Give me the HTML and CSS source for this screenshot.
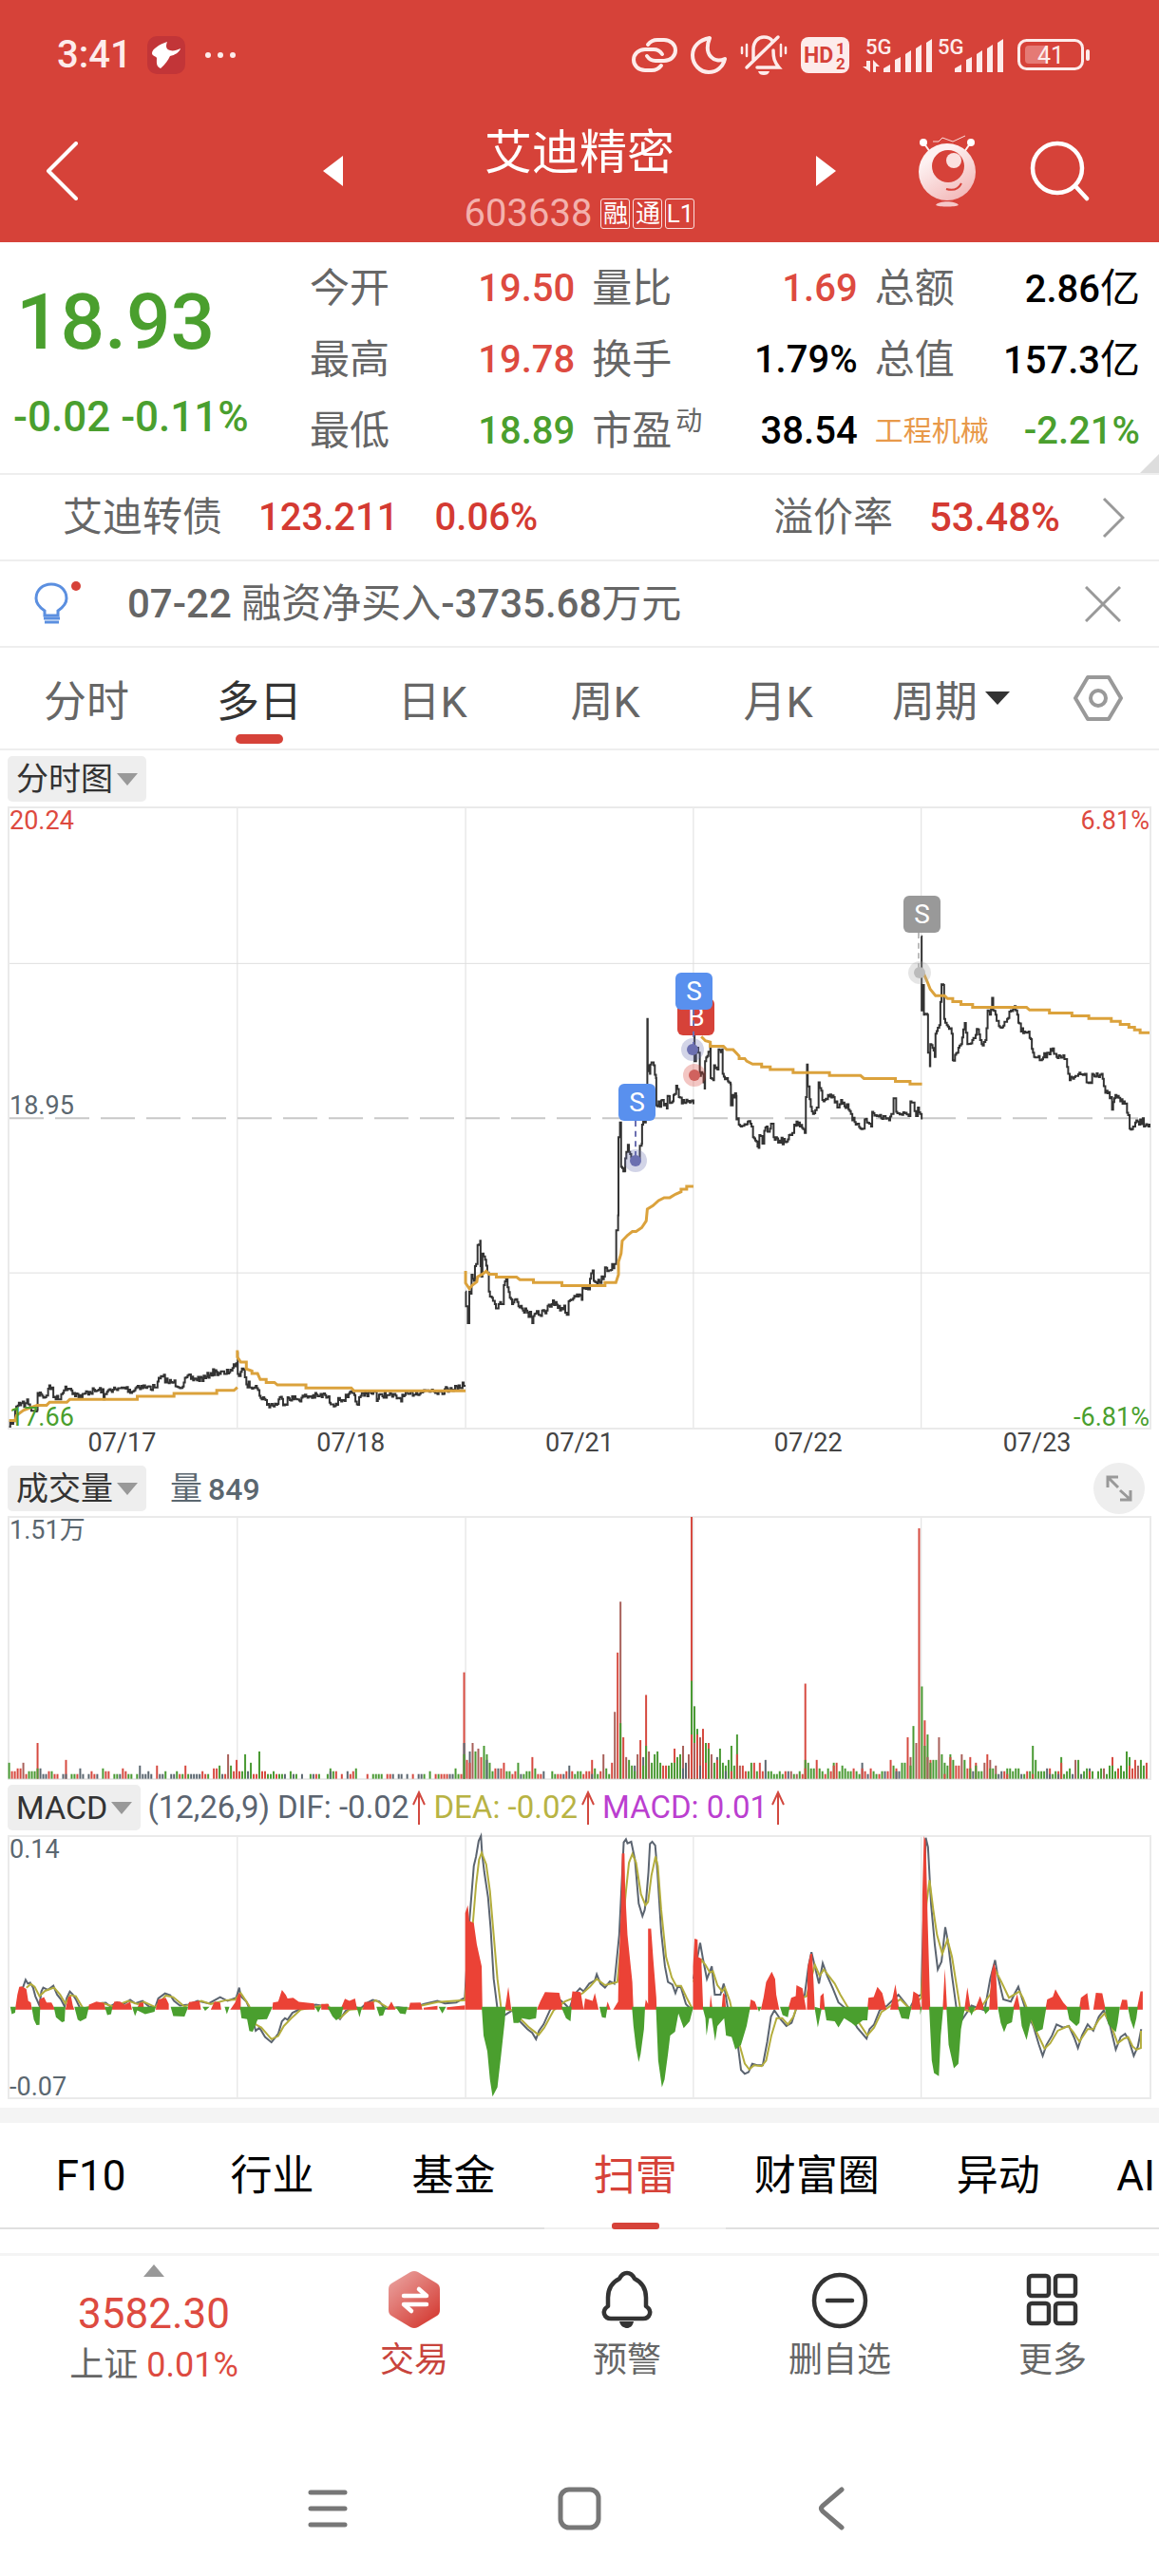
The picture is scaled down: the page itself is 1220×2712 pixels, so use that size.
FILE: index.html
```
<!DOCTYPE html>
<html lang="zh-CN">
<head>
    <meta charset="utf-8" />
    <meta name="viewport" content="width=device-width, initial-scale=1" />
    <title>艾迪精密 603638</title>
    <link rel="stylesheet" href="styles.css">
</head>
<body>
    <header class="top">
        <div class="statusBar">
            <span class="clock">3:41</span>
            <svg class="appBadge" width="40" height="40" viewBox="0 0 40 40"><rect width="40" height="40" rx="10" fill="#c23538"/><path d="M21 6C12 9 5 14 5 18c0 3 4 3 5 5 0 4-1 9 4 11 5-4 8-9 10-13 5-1 10-4 11-8-4 2-8 3-11 2-4-1-5-4-3-9z" fill="#fff"/></svg>
            <svg width="34" height="8" viewBox="0 0 34 8" fill="#fdeceb"><circle cx="4" cy="4" r="3"/><circle cx="17" cy="4" r="3"/><circle cx="30" cy="4" r="3"/></svg>
            <div class="statusIcons">
                <svg width="48" height="36" viewBox="0 0 48 36" fill="none" stroke="#fdeceb" stroke-width="4" stroke-linecap="round"><path d="M17 7c3-4 6-5 10-5h7c7 0 12 5 12 11s-5 11-12 11h-9c-4 0-7-2-9-5"/><path d="M31 29c-3 4-6 5-10 5h-7C7 34 2 29 2 23s5-11 12-11h9c4 0 7 2 9 5"/></svg>
                <svg width="38" height="40" viewBox="0 0 38 40" fill="none" stroke="#fdeceb" stroke-width="4" stroke-linejoin="round"><path d="M20 2C9 4 2 11 2 20c0 10 8 18 17 18 8 0 15-5 17-14-11 5-23-4-16-22z"/></svg>
                <svg width="50" height="44" viewBox="0 0 50 44" fill="none" stroke="#fdeceb" stroke-width="3.5" stroke-linecap="round"><path d="M14 27V16C14 8 19 3 25 3c4 0 7 1 9 4M35 17c0 8 1 12 6 18H18M7 35L40 3"/><path d="M2 14v6M7 11v12M43 11v12M48 14v6" stroke-width="2.5"/><path d="M19 39h12c-1 3-3 4-6 4s-5-1-6-4z" fill="#fdeceb" stroke="none"/></svg>
                <svg width="51" height="38" viewBox="0 0 51 38"><rect width="51" height="38" rx="8" fill="#fdeceb"/><text class="svgText" x="3" y="27" font-size="23" font-weight="700" fill="#d64239">HD</text><text class="svgText" x="37" y="18" font-size="17" font-weight="700" fill="#d64239">1</text><text class="svgText" x="37" y="34" font-size="17" font-weight="700" fill="#d64239">2</text></svg>
                <div class="signals">
                    <svg width="73" height="38" viewBox="0 0 73 38" fill="#fdeceb"><text class="svgText" x="3" y="18" font-size="22" font-weight="500">5G</text><path d="M4 25h4v12L0 31h4zM11 37V24l7 7h-4v6z"/><path d="M22 37v-4l7-4v8zM34 37V24l6-3v16zM45 37V18l6-4v23zM56 37V12l6-4v29zM67 37V6l6-4v35z"/></svg>
                    <svg width="70" height="38" viewBox="0 0 70 38" fill="#fdeceb"><text class="svgText" x="0" y="18" font-size="22" font-weight="500">5G</text><path d="M18 37v-4l7-4v8zM30 37V24l6-3v16zM41 37V18l6-4v23zM52 37V12l6-4v29zM63 37V6l6-4v35z"/></svg>
                </div>
                <svg width="76" height="34" viewBox="0 0 76 34"><rect x="1.500" y="1.500" width="67" height="30" rx="8" fill="none" stroke="#fdeceb" stroke-width="3"/><rect x="8" y="7" width="24" height="19" rx="4" fill="#e57a75"/><rect x="72" y="11" width="4" height="12" rx="2" fill="#fdeceb"/><text class="svgText" x="35" y="26" font-size="25" text-anchor="middle" fill="#fdeceb">41</text></svg>
            </div>
        </div>
        <div class="titleBar">
            <div class="titleSide">
                <button class="iconButton" aria-label="返回"><svg width="34" height="62" viewBox="0 0 34 62"><path d="M32 2L3 31l29 29" fill="none" stroke="#fff" stroke-width="4" stroke-linecap="round" stroke-linejoin="round"/></svg></button>
                <button class="iconButton" aria-label="上一只"><svg width="21" height="32" viewBox="0 0 21 32"><path d="M21 0v32L0 16z" fill="#fff"/></svg></button>
            </div>
            <div class="stockTitle">
                <h1>艾迪精密</h1>
                <div class="stockCode"><span>603638</span><i>融</i><i>通</i><i>L1</i></div>
            </div>
            <div class="titleSide titleRight">
                <button class="iconButton" aria-label="下一只"><svg width="21" height="32" viewBox="0 0 21 32"><path d="M0 0v32l21-16z" fill="#fff"/></svg></button>
                <div class="titleTools">
                    <button class="iconButton" aria-label="助手">
                        <svg width="61" height="76" viewBox="0 0 61 76">
                            <defs><linearGradient id="bot" x1="0" y1="0" x2="0.600" y2="1"><stop offset="0.300" stop-color="#fdf1f1"/><stop offset="1" stop-color="#f3bcbc"/></linearGradient></defs>
                            <path d="M5 8l7 10M55 8l-7 10" stroke="#fdf1f1" stroke-width="2"/>
                            <circle cx="5" cy="8" r="4" fill="#fff"/><circle cx="55" cy="8" r="4" fill="#fff"/>
                            <path d="M15 7h6l4-4 11 4 13-6" fill="none" stroke="#fbdedd"/>
                            <circle cx="30" cy="39" r="30" fill="url(#bot)"/>
                            <circle cx="31" cy="33" r="17" fill="#d64239"/><circle cx="37" cy="27" r="8" fill="#fbe0df"/>
                            <path d="M29 57c7 2 13 0 16-6" fill="none" stroke="#d64239" stroke-width="2"/>
                            <path d="M18 74c3-5 21-5 24 0-4 2-20 2-24 0z" fill="#f5c8c8"/>
                        </svg>
                    </button>
                    <button class="iconButton" aria-label="搜索"><svg width="63" height="64" viewBox="0 0 63 64" fill="none" stroke="#fff" stroke-width="4.500" stroke-linecap="round"><circle cx="29" cy="29" r="26"/><path d="M48 48l12 13"/></svg></button>
                </div>
            </div>
        </div>
    </header>

    <section class="quote">
        <div class="priceBox">
            <div class="price">18.93</div>
            <div class="change">-0.02 -0.11%</div>
        </div>
        <dl class="stats">
            <div><dt>今开</dt><dd class="up">19.50</dd></div>
            <div><dt>量比</dt><dd class="up">1.69</dd></div>
            <div><dt>总额</dt><dd>2.86<small>亿</small></dd></div>
            <div><dt>最高</dt><dd class="up">19.78</dd></div>
            <div><dt>换手</dt><dd>1.79%</dd></div>
            <div><dt>总值</dt><dd>157.3<small>亿</small></dd></div>
            <div><dt>最低</dt><dd class="down">18.89</dd></div>
            <div><dt>市盈<sup>动</sup></dt><dd>38.54</dd></div>
            <div><dt class="industry">工程机械</dt><dd class="down">-2.21%</dd></div>
        </dl>
    </section>

    <a class="bond" href="#bond">
        <span>艾迪转债</span><b>123.211</b><b>0.06%</b>
        <span class="premium">溢价率</span><b>53.48%</b>
        <svg width="24" height="44" viewBox="0 0 24 44"><path d="M2 2l20 20L2 42" fill="none" stroke="#999" stroke-width="3"/></svg>
    </a>

    <div class="notice">
        <svg width="50" height="48" viewBox="0 0 50 48" fill="none" stroke="#5b8fe0" stroke-width="3"><path d="M11 36v-5C5 27 2 23 2 18 2 9 9 3 18 3s16 6 16 15c0 5-3 9-9 13v5z"/><path d="M10 39h17M11 43h15"/><circle cx="44" cy="5" r="5" fill="#d64239" stroke="none"/></svg>
        <p><b>07-22</b> 融资净买入<b>-3735.68</b>万元</p>
        <button class="iconButton" aria-label="关闭"><svg width="38" height="38" viewBox="0 0 38 38"><path d="M1 1l36 36M37 1L1 37" stroke="#999" stroke-width="3"/></svg></button>
    </div>

    <nav class="periodTabs">
        <button>分时</button>
        <button class="active">多日</button>
        <button>日K</button>
        <button>周K</button>
        <button>月K</button>
        <button>周期<svg width="26" height="14" viewBox="0 0 26 14"><path d="M0 0h26L13 14z" fill="#333"/></svg></button>
        <button aria-label="设置"><svg width="52" height="48" viewBox="0 0 52 48" fill="none" stroke="#999" stroke-width="4"><path d="M15 2h22l13 22-13 22H15L2 24z" stroke-linejoin="round"/><circle cx="26" cy="24" r="8"/></svg></button>
    </nav>

    <main class="charts">
        <div class="chartTools">
            <button class="picker">分时图<svg width="22" height="13" viewBox="0 0 22 13"><path d="M0 0h22L11 13z" fill="#999"/></svg></button>
        </div>
        <div class="chart priceChart">
            <svg viewBox="23 22 3042 1465" preserveAspectRatio="none">
                <path class="grid" d="M631 22V1487M1240 22V1487M1848 22V1487M2456 22V1487M23 389H3065M23 1121H3065"/>
                <path class="midLine" d="M23 755H3065"/>
                <g id="priceLines"></g>
                <g class="average">
                    <path d="M22 1470H38L42 1458 60 1446 75 1441 97 1434H122L130 1427H176L184 1420H364V1413H462V1406H576V1399H622L631 1392"/>
                    <path d="M631 1304V1320L640 1332H655V1348L670 1353V1359H685L692 1373H708V1380H730L738 1386H814V1393H935L942 1400H1240"/>
                    <path d="M1240 1116V1145L1250 1158 1258 1150 1270 1142 1272 1130 1285 1124 1295 1117 1303 1124H1322V1131H1376L1385 1137H1421V1144H1497V1151H1612V1144H1641L1648 1125V1095L1655 1075 1658 1045 1672 1032 1685 1023H1695L1710 1014 1722 998 1725 970 1740 962 1755 950 1770 943H1785L1800 935 1815 929V923H1830V916H1848"/>
                    <path d="M1869 562L1880 572 1893 575V585H1928L1937 593H1954L1970 608V614H1985L1990 620 2006 627H2030V634H2053V640H2114V647H2211V654H2294L2303 661H2387V668H2426V674H2458"/>
                    <path d="M2462 412L2472 432 2480 450 2494 465H2518L2526 472H2540V479H2562V486H2593V493H2737L2745 499H2798V506H2858V513H2903V519H2963V526H2987V533H3010V540H3025V546H3040V553H3065"/>
                </g>
            </svg>
            <span class="mark red m2">B</span>
            <span class="mark blue m1">S</span>
            <span class="mark blue m3">S</span>
            <span class="mark grey m4">S</span>
            <i class="stem s1"></i><i class="stem s3"></i><i class="stem s4"></i>
            <i class="dot d1"></i><i class="dot d2"></i><i class="dot d3"></i><i class="dot d4"></i>
            <span class="axis topLeft up">20.24</span>
            <span class="axis topRight up">6.81%</span>
            <span class="axis middle">18.95</span>
            <span class="axis bottomLeft down">17.66</span>
            <span class="axis bottomRight down">-6.81%</span>
        </div>
        <div class="dates"><span>07/17</span><span>07/18</span><span>07/21</span><span>07/22</span><span>07/23</span></div>

        <div class="chartTools">
            <button class="picker">成交量<svg width="22" height="13" viewBox="0 0 22 13"><path d="M0 0h22L11 13z" fill="#999"/></svg></button>
            <span class="volumeNow">量<b>849</b></span>
            <button class="expand" aria-label="放大"><svg width="28" height="28" viewBox="0 0 28 28" fill="none" stroke="#999" stroke-width="3"><path d="M2 13V2h11M3 3l10 10M26 16v10H15M25 25L15 16"/></svg></button>
        </div>
        <div class="chart subChart">
            <svg viewBox="23 291 3042 829" preserveAspectRatio="none">
                <path class="grid" d="M631 291V1120M1240 291V1120M1848 291V1120M2456 291V1120"/>
                <g id="volumeBars"></g>
            </svg>
            <span class="axis topLeft">1.51万</span>
        </div>

        <div class="chartTools">
            <button class="picker">MACD<svg width="22" height="13" viewBox="0 0 22 13"><path d="M0 0h22L11 13z" fill="#999"/></svg></button>
            <div class="macdValues">
                <span>(12,26,9)</span>
                <span>DIF: -0.02<svg width="14" height="36" viewBox="0 0 14 36"><path d="M7 36V2M1 15L7 2l6 13"/></svg></span>
                <span class="dea">DEA: -0.02<svg width="14" height="36" viewBox="0 0 14 36"><path d="M7 36V2M1 15L7 2l6 13"/></svg></span>
                <span class="macd">MACD: 0.01<svg width="14" height="36" viewBox="0 0 14 36"><path d="M7 36V2M1 15L7 2l6 13"/></svg></span>
            </div>
        </div>
        <div class="chart subChart">
            <svg viewBox="23 188 3042 829" preserveAspectRatio="none">
                <path class="grid" d="M631 188V1017M1240 188V1017M1848 188V1017M2456 188V1017"/>
                <g class="dif">
                    <path d="M58 670L66 643 72 655 78 652 86 668 92 695 103 725 108 680 113 668 125 675 140 662 150 690 160 705 170 728 176 700 184 680 192 690 200 705 212 735 245 730 255 718 280 716 292 728 310 715 325 722 345 707 358 718 378 710 395 728 412 730 420 702 438 686 452 692 462 710 478 725 500 722 525 710 555 718 585 698 605 710 628 700 636 668 640 695 655 712 665 740 680 805 690 795 705 825 722 842 740 815 750 775 758 765 765 770 778 748 795 738 840 722 870 728 890 750 905 768 920 742 945 730 960 735 975 718 992 707 1010 712 1025 735 1060 730 1090 735 1130 720 1165 710 1185 718 1215 715 1238 700 1250 460 1262 280 1268 250 1275 200 1281 185 1284 240 1290 300 1300 380 1307 480 1315 640 1325 735 1345 755 1365 740 1385 775 1405 800 1418 812 1428 832 1436 805 1448 785 1465 740 1485 700 1505 720 1517 735 1530 690 1545 670 1555 680 1570 655 1585 645 1590 625 1600 655 1612 668 1625 648 1637 655 1650 500 1662 205 1668 195 1672 208 1682 203 1692 260 1702 400 1712 440 1718 420 1722 385 1728 300 1732 210 1738 203 1746 215 1752 300 1762 490 1772 600 1780 650 1792 658 1800 685 1806 665 1815 668 1828 720 1840 735"/>
                    <path d="M1848 640L1866 525 1874 580 1884 640 1897 600 1905 690 1920 690 1929 655 1940 735 1966 845 1975 930 1985 942 1995 937 2005 910 2018 915 2033 915 2045 840 2055 760 2064 740 2080 768 2096 790 2110 780 2125 725 2145 690 2155 600 2163 555 2172 600 2183 655 2193 590 2205 630 2220 670 2235 715 2255 735 2285 795 2310 830 2318 800 2330 785 2345 740 2365 725 2395 690 2425 735 2440 700 2456 690 2468 190 2474 220 2482 400 2492 530 2500 610 2510 585 2520 475 2527 520 2538 630 2550 735 2565 770 2590 725 2625 740 2640 640 2653 580 2660 630 2675 705 2695 712 2706 685 2715 665 2727 710 2735 740 2755 790 2770 850 2780 885 2790 850 2805 820 2817 785 2835 795 2850 790 2865 830 2874 860 2885 820 2900 785 2915 805 2930 760 2943 740 2960 790 2975 865 2988 825 3000 815 3010 835 3023 885 3034 855 3043 800"/>
                </g>
                <g class="deaLine">
                    <path d="M68 668L80 656 90 665 103 695 118 678 142 668 158 690 172 718 185 692 200 695 220 735 270 717 300 728 340 710 365 720 382 713 412 730 440 693 460 698 490 728 535 710 560 720 600 708 625 706 640 685 662 725 680 785 695 795 722 832 740 822 755 790 775 765 800 738 870 722 905 765 930 738 965 735 1000 708 1030 730 1085 735 1165 714 1238 708 1260 455 1268 340 1276 260 1283 238 1295 275 1305 360 1315 500 1325 640 1335 735 1365 740 1385 765 1410 795 1435 818 1450 795 1475 740 1505 712 1530 700 1553 685 1572 665 1590 640 1612 660 1645 650 1668 360 1676 270 1685 242 1695 270 1708 370 1720 405 1727 395 1736 310 1747 250 1753 280 1762 420 1775 570 1790 635 1802 662 1815 662 1830 700 1845 735"/>
                    <path d="M1848 650L1870 580 1880 595 1892 620 1900 615 1912 660 1925 680 1932 668 1945 710 1970 845 1985 910 1997 928 2010 915 2030 918 2042 900 2056 820 2070 765 2085 765 2100 785 2115 760 2130 705 2150 695 2172 595 2185 630 2196 610 2225 655 2240 690 2260 730 2290 780 2312 820 2330 795 2350 745 2400 705 2425 735 2456 700 2470 400 2478 325 2488 420 2498 500 2512 560 2526 515 2538 570 2550 660 2560 735 2590 745 2620 722 2640 690 2655 615 2670 650 2690 700 2718 680 2727 700 2740 740 2760 800 2785 862 2800 845 2820 805 2848 790 2862 810 2878 840 2900 800 2915 800 2930 770 2945 750 2960 780 2980 845 2997 830 3008 825 3020 855 3030 865 3042 860V805"/>
                </g>
                <path class="positive" d="M38 738L44 690 49 665 56 664 68 672 73 710 80 715 83 738zM103 738V705L115 698 122 715 135 715 145 738zM172 738L180 697 187 695 192 725 196 738zM233 738L235 722 255 712 275 717 280 738zM294 738L303 712 318 712 330 722 345 713 350 738zM362 738L370 716 380 715 382 738zM413 738L420 705 440 700 448 720V738zM498 738L502 714 530 710 534 738zM560 738L570 712 585 715 588 738zM612 738L625 715 635 684 640 690V738zM724 738L726 715 740 712 750 675 760 690 765 702 780 700 795 713 836 718 838 738zM855 738V720H875V738zM906 738L918 703 930 710 945 702 951 738zM966 738L970 714 995 712 998 738zM1030 738L1042 712 1053 738zM1088 738L1092 716 1120 715 1125 738zM1128 738V732L1165 726V738zM1190 738V730L1238 724V738zM1239 738V430L1246 405 1250 455 1262 462 1270 530 1283 600 1285 738zM1345 738L1354 665 1362 738zM1430 738L1440 710 1452 682 1490 684 1500 738zM1519 738L1525 680 1547 682 1555 738 1559 702 1579 710 1585 685 1595 738zM1614 738L1619 712 1627 738zM1634 738L1647 712 1648 640 1655 400 1657 240H1664L1666 360 1672 500 1685 650 1688 738zM1717 738L1721 705 1727 720V480H1735L1741 580 1749 700 1750 738zM1847 738V600L1851 512 1859 515 1860 570 1869 575 1874 738zM1891 738L1894 690 1899 738zM1923 738L1927 685 1932 690 1935 738zM1997 738L2001 705 2012 712 2020 738zM2028 738L2035 700 2042 650 2057 617 2066 640 2069 690 2077 738zM2100 738L2109 700 2121 695 2123 660 2139 670 2149 738zM2151 738L2153 600 2160 560H2165L2172 738zM2185 738L2187 695 2195 685 2199 738zM2312 738L2315 700 2329 698 2339 665 2352 685 2363 738zM2373 738L2387 657 2397 738zM2429 738L2435 680 2449 690 2456 738zM2457 738L2459 370 2463 185 2468 200 2473 450 2480 738zM2513 738L2519 608 2525 738zM2571 738L2579 667 2588 738zM2599 738L2613 695 2625 738zM2637 738L2643 620 2650 590 2655 610 2660 738zM2699 738L2712 688 2720 738zM2787 738L2792 705 2807 697 2814 673 2822 690 2835 715 2852 738zM2877 738L2882 700 2899 685 2905 738zM2915 738L2922 684 2939 686 2948 738zM2985 738L2992 706 3005 707 3008 738zM3031 738L3041 680H3047V738z"/>
                <path class="negative" d="M25 729L29 752 38 748 40 729zM82 729L88 770 95 787 103 786 105 729zM141 729L147 762 163 778 170 775 172 729zM196 729L205 770 212 775 228 765 235 729zM277 729L284 755 294 752 298 729zM350 729L358 758 364 740 385 752 410 745 413 729zM453 729L460 758 490 760 500 729zM538 729L545 742 557 729zM597 729L603 752 610 729zM638 729L642 765 657 768 663 806 672 808 685 770 710 768 725 729zM838 729L847 747 855 729zM871 729L885 760 895 772 908 760 914 729zM949 729L957 762 964 729zM1002 729L1010 758 1020 756 1028 729zM1053 729L1065 750 1080 752 1085 729zM1168 729L1178 750 1188 729zM1283 729L1288 820 1298 870 1305 960 1312 1015 1325 985 1335 880 1345 770 1347 729zM1363 729L1368 780 1382 780 1390 765 1410 770 1428 765 1431 729zM1495 729L1508 765 1520 775 1523 729zM1597 729L1604 762 1614 764 1619 729zM1684 729L1688 790 1695 860 1702 905 1707 880 1716 800 1719 729zM1748 729L1754 900 1764 985 1771 960 1780 880 1786 820 1799 808 1808 750 1822 797 1838 775 1848 729zM1872 729L1880 765 1883 820 1890 765 1897 765 1906 838 1912 790 1930 765 1935 820 1950 825 1960 865 1975 850 1990 790 2000 729zM2018 729L2023 745 2030 729zM2079 729L2086 755 2100 762 2105 729zM2171 729L2180 795 2190 735zM2197 729L2203 772 2225 775 2235 795 2250 765 2270 780 2280 790 2300 772 2312 772 2315 729zM2393 729L2403 765 2423 768 2430 729zM2453 729V755L2458 729zM2477 729L2484 900 2490 940 2503 950 2508 820 2515 729zM2523 729L2529 850 2543 925 2555 910 2562 800 2573 729zM2581 729L2590 757 2600 729zM2620 729L2627 752 2637 740V729zM2660 729L2668 780 2677 810 2685 785 2698 778 2704 729zM2718 729L2724 790 2737 835 2745 790 2750 770 2762 810 2780 800 2790 729zM2844 729L2851 770 2870 790 2878 780 2882 729zM2945 729L2955 785 2975 810 2980 780 2986 729zM3007 729L3014 770 3023 800 3030 765 3034 729z"/>
            </svg>
            <span class="axis topLeft">0.14</span>
            <span class="axis bottomLeft">-0.07</span>
        </div>
    </main>

    <nav class="infoTabs">
        <a href="#f10">F10</a>
        <a href="#industry">行业</a>
        <a href="#fund">基金</a>
        <a href="#risk" class="active">扫雷</a>
        <a href="#club">财富圈</a>
        <a href="#moves">异动</a>
        <a href="#ai" class="cut">AI</a>
    </nav>

    <footer class="actions">
        <button class="indexBox">
            <svg width="22" height="13" viewBox="0 0 22 13"><path d="M11 0l11 13H0z" fill="#999"/></svg>
            <span class="indexValue">3582.30</span>
            <span class="indexName">上证 <b>0.01%</b></span>
        </button>
        <button class="trade">
            <svg width="60" height="62" viewBox="0 0 60 62"><defs><linearGradient id="hex" x1="0" y1="0" x2="0.800" y2="1"><stop offset="0" stop-color="#eba9a6"/><stop offset="1" stop-color="#d43a32"/></linearGradient></defs><path d="M26 2q4-2 8 0l20 12q3 2 3 6v22q0 4-3 6L34 60q-4 2-8 0L6 48q-3-2-3-6V20q0-4 3-6z" fill="url(#hex)"/><path d="M19 27h24l-8-7M43 36H19l8 7" fill="none" stroke="#fff" stroke-width="4.500" stroke-linecap="round" stroke-linejoin="round"/></svg>
            交易
        </button>
        <button>
            <svg width="60" height="62" viewBox="0 0 60 62" fill="none" stroke="#333" stroke-width="4.500" stroke-linejoin="round"><path d="M30 3c4 0 6 2 8 6 8 4 12 11 12 20v9c3 2 5 4 4 8-1 3-3 5-7 5H13c-4 0-6-2-7-5-1-4 1-6 4-8v-9c0-9 4-16 12-20 2-4 4-6 8-6z"/><path d="M22 54h15c-1 5-4 7-7 7s-7-2-8-7z" fill="#333" stroke="none"/></svg>
            预警
        </button>
        <button>
            <svg width="60" height="62" viewBox="0 0 60 62" fill="none" stroke="#333" stroke-width="4.500"><circle cx="30" cy="32" r="27"/><path d="M17 32h26" stroke-linecap="round"/></svg>
            删自选
        </button>
        <button>
            <svg width="60" height="62" viewBox="0 0 60 62" fill="none" stroke="#333" stroke-width="4.500"><rect x="5" y="6" width="21" height="21" rx="3"/><rect x="33" y="6" width="21" height="21" rx="3"/><rect x="5" y="35" width="21" height="21" rx="3"/><rect x="33" y="35" width="21" height="21" rx="3"/></svg>
            更多
        </button>
    </footer>

    <nav class="systemNav">
        <button aria-label="菜单"><svg width="44" height="46" viewBox="0 0 44 46" stroke="#777" stroke-width="5" stroke-linecap="round"><path d="M4 6h36M4 23h36M4 40h36"/></svg></button>
        <button aria-label="主页"><svg width="46" height="46" viewBox="0 0 46 46"><rect x="3" y="3" width="40" height="40" rx="9" fill="none" stroke="#777" stroke-width="5"/></svg></button>
        <button aria-label="后退"><svg width="28" height="46" viewBox="0 0 28 46"><path d="M25 3L5 20q-3 3 0 6l20 17" fill="none" stroke="#777" stroke-width="5" stroke-linecap="round"/></svg></button>
    </nav>

    <script src="charts.js"></script>
</body>
</html>
```
FILE: styles.css
```
*
{
    box-sizing:border-box;
}
body
{
    margin:0;
    background:#fff;
    color:#666;
    font-family:Roboto, "Noto Sans CJK SC", sans-serif;
    font-size:40px;
    overflow-x:hidden;
}
button
{
    margin:0;
    padding:0;
    border:0;
    background:none;
    color:inherit;
    font:inherit;
}
a
{
    color:inherit;
    text-decoration:none;
}
svg
{
    display:block;
    flex:none;
}
.up
{
    color:#dd4a40;
}
.down
{
    color:#4a9f2e;
}
.svgText
{
    font-family:Roboto, sans-serif;
}

/* header */
.top
{
    height:255px;
    background:#d64239;
    color:#fff;
}
.statusBar
{
    display:flex;
    align-items:center;
    gap:20px;
    height:115px;
    padding:0 73px 0 60px;
}
.clock
{
    color:#fdeceb;
    font-size:40px;
    font-weight:500;
}
.appBadge
{
    margin-left:-4px;
}
.statusIcons
{
    display:flex;
    align-items:center;
    gap:14px;
    margin-left:auto;
}
.signals
{
    display:flex;
    gap:6px;
}
.titleBar
{
    display:grid;
    grid-template-columns:1fr 498px 1fr;
    height:140px;
}
.titleSide
{
    display:flex;
    align-items:center;
    justify-content:space-between;
    padding:0 0 12px 48px;
}
.titleRight
{
    padding:0 73px 12px 0;
}
.titleTools
{
    display:flex;
    align-items:center;
    gap:56px;
}
.stockTitle
{
    padding-top:14px;
    text-align:center;
}
.stockTitle h1
{
    margin:0;
    font-size:50px;
    font-weight:400;
    line-height:64px;
}
.stockCode
{
    display:flex;
    align-items:center;
    justify-content:center;
    gap:3px;
    line-height:64px;
    color:#f3b1ad;
}
.stockCode span
{
    margin-right:6px;
}
.stockCode i
{
    width:31px;
    height:32px;
    border:1px solid #fbdedd;
    border-radius:3px;
    color:#fff;
    font-size:26px;
    font-style:normal;
    line-height:30px;
}

/* quote */
.quote
{
    position:relative;
    display:flex;
    height:245px;
    border-bottom:2px solid #eee;
}
.quote::after
{
    content:"";
    position:absolute;
    right:0;
    bottom:0;
    border:solid transparent;
    border-width:10px;
    border-right-color:#ddd;
    border-bottom-color:#ddd;
}
.priceBox
{
    width:326px;
    color:#4a9f2e;
    font-weight:500;
}
.price
{
    padding:36px 0 0 17px;
    font-size:82px;
    line-height:96px;
}
.change
{
    padding-left:14px;
    font-size:44px;
    line-height:104px;
}
.stats
{
    flex:1;
    display:grid;
    grid-template-columns:repeat(3, 1fr);
    grid-auto-rows:75px;
    column-gap:18px;
    margin:0;
    padding:11px 20px 0 0;
}
.stats div
{
    display:flex;
    justify-content:space-between;
    align-items:center;
    white-space:nowrap;
}
.stats dt
{
    font-size:42px;
    line-height:75px;
}
.stats sup
{
    margin-left:4px;
    font-size:28px;
    line-height:0;
}
.stats dt.industry
{
    color:#e8994a;
    font-size:30px;
}
.stats dd
{
    margin:0;
    font-weight:500;
    line-height:75px;
}
.stats dd:not(.up):not(.down)
{
    color:#000;
}
.stats small
{
    font-size:42px;
    font-weight:400;
}

/* bond and notice rows */
.bond, .notice
{
    display:flex;
    align-items:center;
    height:91px;
    border-bottom:2px solid #eee;
    font-size:42px;
    line-height:88px;
}
.bond
{
    padding:0 36px 0 66px;
}
.bond b
{
    margin-left:38px;
    color:#d43a32;
    font-size:40px;
    font-weight:500;
}
.bond .premium
{
    margin-left:auto;
}
.bond .premium + b
{
    font-size:42px;
}
.bond svg
{
    margin-left:44px;
}
.notice
{
    padding:0 40px 0 36px;
}
.notice p
{
    flex:1;
    margin:0 0 0 48px;
}
.notice b
{
    font-weight:500;
}

/* period tabs */
.periodTabs
{
    display:grid;
    grid-template-columns:repeat(6, 182fr) 128fr;
    height:108px;
    border-bottom:2px solid #eee;
    font-size:45px;
}
.periodTabs button
{
    position:relative;
    display:flex;
    align-items:center;
    justify-content:center;
    gap:8px;
}
.periodTabs .active
{
    color:#333;
}
.periodTabs .active::after, .infoTabs .active::after
{
    content:"";
    position:absolute;
    bottom:5px;
    left:50%;
    width:50px;
    height:10px;
    margin-left:-25px;
    border-radius:5px;
    background:#d64239;
}

/* charts */
.charts
{
    padding:6px 8px 9px;
    border-bottom:16px solid #f4f4f4;
}
.chartTools
{
    display:flex;
    align-items:center;
    height:48px;
    margin-bottom:5px;
    font-size:34px;
    line-height:48px;
}
.picker
{
    display:flex;
    align-items:center;
    gap:4px;
    height:48px;
    padding:0 9px;
    border-radius:5px;
    background:#eee;
    color:#333;
}
.volumeNow
{
    margin-left:25px;
    color:#5b6770;
}
.volumeNow b
{
    margin-left:6px;
    font-size:32px;
    font-weight:500;
}
.expand
{
    display:flex;
    align-items:center;
    justify-content:center;
    width:54px;
    height:54px;
    margin:0 7px 0 auto;
    border-radius:50%;
    background:#eee;
}
.macdValues
{
    display:flex;
    gap:8px;
    margin-left:7px;
    color:#5b6470;
    font-size:33px;
    white-space:nowrap;
}
.macdValues span
{
    display:flex;
    align-items:center;
    gap:4px;
}
.macdValues svg path
{
    fill:none;
    stroke:#d2483f;
    stroke-width:2;
}
.macdValues .dea
{
    color:#b8b344;
}
.macdValues .macd
{
    color:#bb3fd0;
}
.chart
{
    position:relative;
    border:2px solid #eaeaea;
}
.chart > svg
{
    width:100%;
    height:100%;
    overflow:visible;
}
.priceChart
{
    height:656px;
}
.subChart
{
    height:278px;
    margin-bottom:5px;
}
.subChart:last-child
{
    margin-bottom:0;
}
.chart path
{
    fill:none;
    vector-effect:non-scaling-stroke;
}
.chart .grid
{
    stroke:#dedede;
    stroke-width:1;
}
.chart .midLine
{
    stroke:#c8c8c8;
    stroke-width:2;
    stroke-dasharray:36 12;
}
.priceLine
{
    stroke:#333;
    stroke-width:2;
}
.average
{
    stroke:#dba23c;
    stroke-width:3;
}
.dif
{
    stroke:#5b6470;
    stroke-width:2;
}
.deaLine
{
    stroke:#b3ad3c;
    stroke-width:2;
}
.chart .positive
{
    fill:#eb4236;
}
.chart .negative
{
    fill:#4a9f2e;
}
.axis
{
    position:absolute;
    color:#5b6770;
    font-size:27px;
    line-height:30px;
}
.axis.up
{
    color:#dd4a40;
}
.axis.down
{
    color:#4a9f2e;
}
.topLeft
{
    top:-2px;
    left:0;
}
.topRight
{
    top:-2px;
    right:0;
}
.middle
{
    top:298px;
    left:0;
}
.bottomLeft
{
    bottom:-4px;
    left:0;
}
.bottomRight
{
    bottom:-4px;
    right:0;
}
.dates
{
    display:grid;
    grid-template-columns:repeat(5, 1fr);
    height:38px;
    color:#444;
    font-size:27px;
    line-height:28px;
    text-align:center;
}

/* trade marks on the price line */
.mark
{
    position:absolute;
    width:39px;
    height:39px;
    margin-left:-19px;
    border-radius:6px;
    color:#fff;
    font-size:28px;
    line-height:39px;
    text-align:center;
}
.blue
{
    background:#5990ee;
}
.red
{
    background:#d64239;
}
.grey
{
    background:#999;
}
.m1
{
    left:60%;
    top:173px;
}
.m2
{
    left:60.200%;
    top:200px;
}
.m3
{
    left:55%;
    top:290px;
}
.m4
{
    left:80%;
    top:92px;
}
.stem
{
    position:absolute;
    border-left:2px dashed #6b6fb0;
}
.s1
{
    left:59.900%;
    top:212px;
    height:40px;
}
.s3
{
    left:54.800%;
    top:329px;
    height:38px;
}
.s4
{
    left:79.700%;
    top:131px;
    height:38px;
    border-color:#bbb;
}
.dot
{
    position:absolute;
    width:12px;
    height:12px;
    margin:-6px;
    border-radius:50%;
    background:#6b6fb0;
    box-shadow:0 0 0 6px rgba(107, 111, 176, .3);
}
.d1
{
    left:59.900%;
    top:254px;
}
.d2
{
    left:60.100%;
    top:281px;
    background:#d0625e;
    box-shadow:0 0 0 6px rgba(214, 66, 57, .3);
}
.d3
{
    left:54.900%;
    top:371px;
}
.d4
{
    left:79.800%;
    top:173px;
    background:#bbb;
    box-shadow:0 0 0 6px rgba(170, 170, 170, .3);
}

/* info tabs */
.infoTabs
{
    display:flex;
    height:112px;
    margin-bottom:25px;
    overflow:hidden;
    color:#000;
    font-size:44px;
    line-height:113px;
    text-align:center;
}
.infoTabs a
{
    position:relative;
    flex:0 0 15.660%;
    border-bottom:2px solid #e0e0e0;
}
.infoTabs .active
{
    border-color:#f0f0f0;
    color:#d64239;
}
.infoTabs .active::after
{
    bottom:-2px;
    height:7px;
    border-radius:3px;
}
.infoTabs .cut
{
    padding-left:29px;
    text-align:left;
}

/* bottom bar */
.actions
{
    display:grid;
    grid-template-columns:324fr repeat(4, 224fr);
    height:197px;
    border-top:3px solid #f4f4f4;
    font-size:36px;
    line-height:50px;
}
.actions button
{
    display:flex;
    flex-direction:column;
    align-items:center;
    gap:8px;
    padding-top:15px;
}
.actions .indexBox
{
    gap:0;
    padding-top:9px;
}
.indexValue
{
    margin-top:10px;
    color:#dd4a40;
    font-size:44px;
    line-height:58px;
}
.indexName b
{
    color:#dd4a40;
    font-weight:400;
}
.actions .trade
{
    color:#c8443c;
}
.systemNav
{
    display:flex;
    align-items:center;
    justify-content:center;
    height:144px;
}
.systemNav button
{
    display:flex;
    justify-content:center;
    width:265px;
}
```
FILE: charts.js
```
(function(){
    var NS = "http://www.w3.org/2000/svg",
        colors = { r: "#d64a40", g: "#4a9a34", s: "#5b6770", m: "#a8605a" },
        seed = 7,
        days, volume;

    // one polyline per trading day: x,y pairs
    days = [
        "22,1485 30,1478 38,1445 45,1435 58,1425 62,1438 70,1420 78,1440 85,1447 97,1445 98,1405 110,1412 118,1415 126,1395 136,1392 140,1415 150,1412 158,1420 165,1405 172,1390 185,1395 195,1405 215,1415 230,1402 255,1400 272,1396 274,1420 280,1408 290,1396 310,1398 330,1392 350,1402 365,1388 385,1392 410,1392 418,1378 432,1366 445,1380 460,1380 485,1390 495,1368 520,1372 545,1370 560,1358 575,1355 600,1360 612,1350 625,1342 631,1340",
        "631,1310 632,1360 640,1355 648,1350 655,1385 680,1388 690,1412 700,1415 710,1433 735,1433 744,1415 758,1432 765,1415 790,1420 815,1413 850,1412 865,1410 885,1432 905,1422 925,1415 937,1405 950,1432 960,1412 985,1403 998,1402 1003,1424 1015,1408 1035,1410 1065,1418 1090,1407 1120,1402 1150,1397 1175,1402 1200,1393 1225,1393 1232,1380 1240,1388",
        "1240,1165 1241,1200 1246,1240 1250,1165 1254,1170 1256,1125 1262,1140 1265,1105 1268,1100 1272,1055 1279,1045 1280,1105 1282,1130 1285,1075 1292,1090 1298,1120 1302,1165 1310,1180 1318,1195 1325,1205 1332,1190 1338,1195 1342,1150 1348,1135 1352,1155 1358,1180 1364,1195 1370,1185 1378,1190 1390,1205 1405,1215 1415,1225 1418,1240 1424,1218 1435,1220 1450,1212 1470,1195 1480,1190 1492,1210 1503,1198 1510,1220 1515,1188 1530,1175 1537,1172 1550,1185 1552,1155 1567,1160 1572,1135 1579,1115 1582,1140 1597,1142 1609,1130 1612,1108 1622,1115 1637,1100 1641,1100 1642,1020 1647,985 1648,800 1652,765 1655,870 1665,880 1666,850 1673,818 1679,840 1692,855 1700,850 1705,820 1710,815 1711,770 1719,765 1721,690 1725,520 1726,630 1732,650 1733,628 1742,630 1748,660 1749,725 1755,715 1759,728 1765,712 1769,725 1777,732 1779,702 1789,718 1795,700 1802,678 1809,705 1817,720 1832,716 1848,722",
        "1848,560 1851,620 1855,590 1861,600 1865,655 1872,650 1878,685 1879,620 1893,580 1894,660 1901,665 1903,630 1912,640 1915,592 1925,592 1926,650 1937,660 1947,675 1948,725 1953,700 1962,702 1963,758 1975,775 1987,770 2000,768 2007,800 2022,825 2024,795 2032,815 2037,785 2052,780 2060,768 2062,800 2077,808 2097,810 2109,795 2117,770 2129,765 2145,790 2151,628 2153,680 2158,710 2167,745 2177,730 2182,670 2189,690 2192,712 2207,700 2222,705 2232,730 2242,712 2262,735 2272,760 2287,768 2300,780 2305,758 2322,775 2325,740 2337,750 2367,755 2379,745 2382,708 2387,708 2389,740 2402,745 2422,750 2427,715 2435,718 2442,750 2447,730 2457,758",
        "2456,325 2457,500 2459,440 2463,510 2472,510 2474,600 2479,632 2480,580 2492,610 2494,555 2504,535 2510,438 2515,440 2517,520 2524,535 2537,555 2540,618 2552,600 2562,580 2572,530 2579,580 2592,570 2607,545 2617,580 2627,570 2633,500 2639,510 2645,470 2648,500 2657,525 2672,540 2685,520 2695,500 2705,490 2712,510 2722,550 2742,550 2754,600 2775,618 2792,600 2807,590 2817,610 2842,615 2852,665 2872,655 2892,650 2897,670 2909,672 2912,650 2937,650 2947,695 2962,705 2965,735 2974,700 2987,715 3002,720 3012,780 3027,765 3037,770 3047,755 3050,775 3065,768"
    ];

    // bars by start index: colour letter + height; a slash stacks a shorter bar in front
    volume = {
        0: "g5 r2 r2 r3 r3 m5 r1 g2 g2 g2 r12/g3 s3 s1 s1 r2 g2 r1 r1 . s1 r6/s1 . g1 g1 r1 s3 s1 . s1 r2 r1 s1 . g3 r2 r2 . g1 g1 s1 r3 r2 g1 g1 . g1 s4 s1 s1 s2 s1 . r4 s1 s1 g2 . s1 s1 g2 r1 g1 r4 g1 s1 s1 s1 s1 r2 r1 g1 . r3 r3 g4 s1 r1 m8 g4 r2",
        80: "r6 r2 g2 g8 s2 g5 r1 r1 g9 r2 r2 g1 g1 g2 r1 g1 g1 s1 . g2 s1 g1 . s1 . . g1 s1 r1 g1 . . g1 g3/s2 g2 r2 . r1 . s2 r1 r2 g3 . . . r1 . g1 g1 g1 g1 . r1 r1 s1 . s1 s1 . s1 . r1 . s1 s1 g1 . g2 . r1 g1 r1 r1 r1 s1 s1 g3 g1 r1",
        160: "r37/s12/g8 r6 s9/r5 m12 g9 m10 r7 g11 g8/s6 g5 g2 r3 s3 r3 r5 g2 g2 r1 r2 g5 s1 g1 g2 g2 r7 g3 r1 r1 s2 . . g2 g1 r1 r1 s1 r2",
        197: "s4 r2 g1 g2 g2 r1 r2 r2 r6/s1 g3 g1 r2 m8 g3 g1 r5 m23 r44 m62/g19 r14 m7 g6 g4 s4/g2 m8 r13 s7/g4 r29/g11 m9 g5 g8 g9 g5 r4 r4 g4 g5 r10/g5 g7 g8 m11/s3 s5 m8",
        240: "r92/g34/r15 g25/m12 g17/r15 m14/s4 r17 g12/r5 r12/g10 m8 g5 s7/r6 g10 g5 g4/s2 g6 g11/r2 g4 g15/r8 m4 r4 r2 g2 g5 r5 g2 r5 r2 s6 g2 g2 g1 g1 g2 g1 r2 s2 m2 g1 m1 g2 r1",
        280: "r33/g6/r3 g5 g3 g3 r6 g3 g2 r1 g3 r2 g5/r4 r5 g2 g4 g3 g2 g2 r3 g2 g1 s5/r3 r2 s1 r3 g2 g1 r1 g2 s2 r2 r6 g4 r3/s2 s2 g5 g5 r14 m7/g4 g18 m12",
        320: "r88 g32 r20/g11 g15/m7 r6/g5 g6 g6 m14 g8 g5/r1 g4 g8/r7 g6 r4 r4 m8 g6 r3 r7/g3 s2 r5/g4 g2 g2 m5 r8 m6/g3 g3 m4/g1 s1 s2 r2 g3/r1 g3 g2 g3 g3 s1 g1 r2 g2 g11/r1 g6 g2 g2 g2 s3 r3/s1 g1 g2 r2/s1 g7/r5 g1 g2 g3 s1 m6 g6 s1 g2 g3 s3/r2 g2 . g2 g3 m3 g1 g4 r7/g4 g2 r3 g4 g2 g9 g7/r4 r3 r6 m4 g6 g4 r5"
    };

    function noise() {
        seed = (seed * 16807) % 2147483647;
        return seed / 2147483647 - 0.5;
    }

    function addPath(parent, d, attrs) {
        var el = document.createElementNS(NS, "path"), key;
        el.setAttribute("d", d);
        for (key in attrs) {
            el.setAttribute(key, attrs[key]);
        }
        parent.appendChild(el);
    }

    // walk between the points in minute steps so the line gets its ticks
    function tickPath(line) {
        var pts = line.split(" ").map(function (p) { return p.split(",").map(Number); }),
            d = "M" + pts[0], i, x, y, a, b;
        for (i = 1; i < pts.length; i++) {
            a = pts[i - 1];
            b = pts[i];
            for (x = a[0] + 3; x < b[0] - 2; x += 3) {
                y = a[1] + (b[1] - a[1]) * (x - a[0]) / (b[0] - a[0]) + noise() * 16;
                d += "H" + x + "V" + Math.round(y);
            }
            d += "H" + b[0] + "V" + b[1];
        }
        return d;
    }

    days.forEach(function (line) {
        addPath(document.getElementById("priceLines"), tickPath(line), { "class": "priceLine" });
    });

    Object.keys(volume).forEach(function (start) {
        volume[start].split(" ").forEach(function (token, i) {
            var x = 22 + (Number(start) + i) * 7.588;
            if (token === ".") {
                return;
            }
            token.split("/").forEach(function (bar) {
                var top = 1116 - 9 * Number(bar.slice(1));
                addPath(document.getElementById("volumeBars"), "M" + x.toFixed(1) + " 1122V" + top, { stroke: colors[bar[0]], "stroke-width": 2 });
            });
        });
    });
}());
```
